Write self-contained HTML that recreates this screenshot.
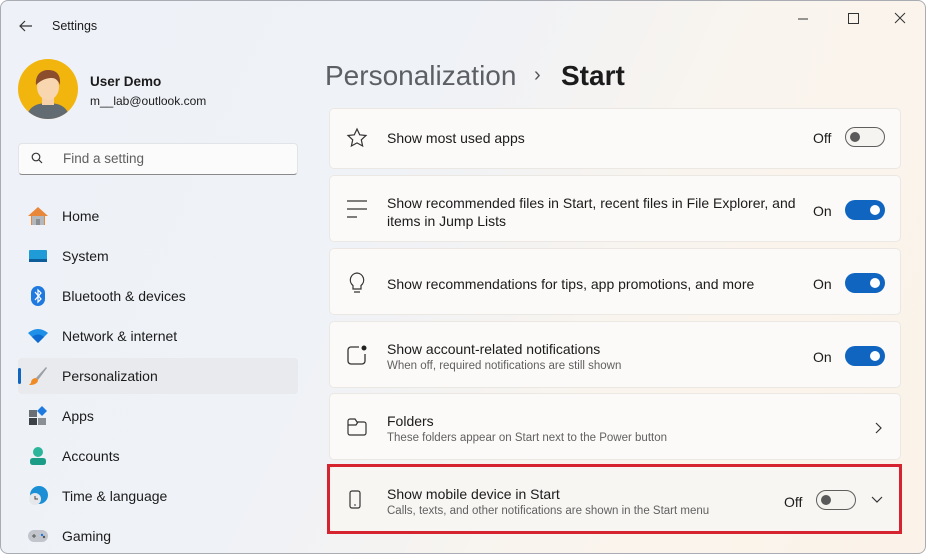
<!DOCTYPE html>
<html><head><style>
*{margin:0;padding:0;box-sizing:border-box}
body{width:926px;height:554px;overflow:hidden;font-family:"Liberation Sans",sans-serif;color:#1b1b1b;background:#fff}
.win{position:absolute;left:0;top:0;width:926px;height:554px;border:1px solid #a9acb2;border-radius:8px;overflow:hidden;
background:linear-gradient(115deg,#eef1f7 0%,#eff2f7 40%,#f9f4ee 65%,#fbf3e9 100%)}
.abs{position:absolute}
.nav{position:absolute;left:17px;width:280px;height:36px;display:flex;align-items:center;font-size:14px}
.nav .ic{width:22px;height:22px;margin-left:9px;margin-right:13px;display:flex;align-items:center;justify-content:center}
.card{position:absolute;left:328px;width:572px;background:#fbfaf8;border:1px solid #ebe8e4;border-radius:5px}
.lab{position:absolute;left:57px;font-size:14px;color:#1b1b1b}
.sub{position:absolute;left:57px;font-size:11.5px;color:#616161}
.st{position:absolute;font-size:14px}
.tog{position:absolute;width:40px;height:20px;border-radius:10px}
.on{background:#0f65c0}
.on::after{content:"";position:absolute;right:5px;top:5px;width:10px;height:10px;border-radius:50%;background:#fff}
.off{border:1px solid #5e5e5e;background:#f6f4f1}
.off::after{content:"";position:absolute;left:4px;top:4px;width:10px;height:10px;border-radius:50%;background:#5a5a5a}
.ci{position:absolute;left:16px}
</style></head><body><div class="win">
<svg class="abs" style="left:17px;top:18px" width="16" height="14" viewBox="0 0 16 14"><path d="M14 7H2M7 2L2 7l5 5" stroke="#333" stroke-width="1.2" fill="none"/></svg>
<div class="abs" style="left:51px;top:18px;font-size:12.5px">Settings</div>
<svg class="abs" style="left:797px;top:11px" width="120" height="14"><path d="M0 7h10" stroke="#333"/><rect x="50.5" y="1.5" width="10" height="10" fill="none" stroke="#333"/><path d="M97 1l10 10M107 1L97 11" stroke="#333"/></svg>
<svg class="abs" style="left:17px;top:58px" width="60" height="60" viewBox="0 0 60 60"><defs><clipPath id="c"><circle cx="30" cy="30" r="30"/></clipPath></defs><g clip-path="url(#c)"><rect width="60" height="60" fill="#f2b50d"/><path d="M8 60c2-12 10-16 22-16s20 4 22 16z" fill="#636b72"/><rect x="24" y="36" width="12" height="10" fill="#f5d0a8"/><ellipse cx="30" cy="28" rx="11" ry="13" fill="#f7d6b0"/><path d="M18 26c-1-10 5-15 12-15 8 0 13 4 12 15-2-5-5-7-8-7-4 0-10 1-16 7z" fill="#8b4d2b"/></g></svg>
<div class="abs" style="left:89px;top:73px;font-size:13.5px;font-weight:bold">User Demo</div>
<div class="abs" style="left:89px;top:93px;font-size:12px">m__lab@outlook.com</div>
<div class="abs" style="left:17px;top:142px;width:280px;height:32px;background:#fbfbfc;border:1px solid #e3e4e8;border-bottom:1px solid #8a8a8a;border-radius:4px"></div>
<svg class="abs" style="left:30px;top:151px" width="12" height="12"><circle cx="5" cy="5" r="3.8" fill="none" stroke="#333" stroke-width="1.2"/><path d="M8 8l3 3" stroke="#333" stroke-width="1.2"/></svg>
<div class="abs" style="left:62px;top:150px;font-size:13.5px;color:#5f5f5f">Find a setting</div>

<div class="nav" style="top:197px"><span class="ic"><svg width="22" height="20"><path d="M11 1L1 10h3v9h14v-9h3z" fill="#e8873a"/><rect x="5" y="10" width="12" height="9" fill="#b4b8bd"/><rect x="9" y="13" width="4" height="6" fill="#8a8f94"/></svg></span>Home</div>
<div class="nav" style="top:237px"><span class="ic"><svg width="20" height="16"><rect x="1" y="2" width="18" height="12" rx="1" fill="#1f9bd8"/><rect x="1" y="11" width="18" height="3" fill="#0d5d9a"/></svg></span>System</div>
<div class="nav" style="top:277px"><span class="ic"><svg width="16" height="22"><rect x="1" y="1" width="14" height="20" rx="7" fill="#1f7ae0"/><path d="M5 7l6 7-3 3V5l3 3-6 7" stroke="#fff" stroke-width="1.2" fill="none"/></svg></span>Bluetooth &amp; devices</div>
<div class="nav" style="top:317px"><span class="ic"><svg width="22" height="16"><path d="M1 5q10-8 20 0L11 15z" fill="#1e90e8"/><path d="M5 9q6-5 12 0l-6 6z" fill="#0c6ad0"/></svg></span>Network &amp; internet</div>
<div class="nav" style="top:357px;background:#e9eaee;border-radius:4px"><span class="abs" style="left:0;top:10px;width:3px;height:16px;background:#0f65c0;border-radius:2px"></span><span class="ic"><svg width="20" height="20"><path d="M18 1L8 12l2 2L19 2z" fill="#9aa0a6"/><path d="M8 12c-3 0-5 2-5 5l-2 2c4 0 9-1 9-5z" fill="#f08a24"/></svg></span>Personalization</div>
<div class="nav" style="top:397px"><span class="ic"><svg width="20" height="20"><rect x="1" y="4" width="8" height="7" fill="#6a6f76"/><rect x="1" y="12" width="8" height="7" fill="#3c4147"/><rect x="10" y="12" width="8" height="7" fill="#8a8f96"/><path d="M14 0l5 5-5 5-5-5z" fill="#1f7ae0"/></svg></span>Apps</div>
<div class="nav" style="top:437px"><span class="ic"><svg width="20" height="20"><circle cx="10" cy="6" r="5" fill="#2bb59a"/><path d="M2 15q0-3 3-3h10q3 0 3 3v1q0 3-3 3H5q-3 0-3-3z" fill="#1a9c86"/></svg></span>Accounts</div>
<div class="nav" style="top:477px"><span class="ic"><svg width="22" height="22"><circle cx="12" cy="10" r="9" fill="#1b8fd6"/><circle cx="8" cy="14" r="6" fill="#e6e7ea"/><path d="M8 11v3h3" stroke="#444" fill="none"/></svg></span>Time &amp; language</div>
<div class="nav" style="top:517px"><span class="ic"><svg width="22" height="16"><rect x="1" y="2" width="20" height="12" rx="6" fill="#c2c6cc"/><path d="M5 8h4M7 6v4" stroke="#555"/><circle cx="15" cy="7" r="1.2" fill="#1f7ae0"/><circle cx="17" cy="9" r="1.2" fill="#555"/></svg></span>Gaming</div>

<div class="abs" style="left:324px;top:59px;font-size:28px;color:#5c5f64">Personalization</div>
<div class="abs" style="left:533px;top:63px;font-size:20px;color:#555">›</div>
<div class="abs" style="left:560px;top:59px;font-size:28px;font-weight:bold">Start</div>

<div class="card" style="top:107px;height:61px">
<svg class="ci" style="top:18px" width="22" height="22"><path d="M11 2l2.7 5.8 6.3.7-4.7 4.3 1.3 6.2L11 15.9 5.4 19l1.3-6.2L2 8.5l6.3-.7z" fill="none" stroke="#333" stroke-width="1.2"/></svg>
<div class="lab" style="top:21px">Show most used apps</div><div class="st" style="left:483px;top:21px">Off</div><div class="tog off" style="left:515px;top:18px"></div></div>

<div class="card" style="top:174px;height:67px">
<svg class="ci" style="top:23px" width="22" height="20"><path d="M1 2h20M1 10h20M1 18h10" stroke="#333" stroke-width="1.2"/></svg>
<div class="lab" style="top:18px;line-height:18px;width:420px">Show recommended files in Start, recent files in File Explorer, and items in Jump Lists</div>
<div class="st" style="left:483px;top:27px">On</div><div class="tog on" style="left:515px;top:24px"></div></div>

<div class="card" style="top:247px;height:67px">
<svg class="ci" style="top:22px" width="22" height="24"><path d="M11 2a7 7 0 0 0-4 12.5V18h8v-3.5A7 7 0 0 0 11 2zM8 21h6" fill="none" stroke="#333" stroke-width="1.2"/></svg>
<div class="lab" style="top:27px">Show recommendations for tips, app promotions, and more</div>
<div class="st" style="left:483px;top:27px">On</div><div class="tog on" style="left:515px;top:24px"></div></div>

<div class="card" style="top:320px;height:67px">
<svg class="ci" style="top:22px" width="22" height="22"><path d="M13 3H5a3 3 0 0 0-3 3v11a3 3 0 0 0 3 3h11a3 3 0 0 0 3-3v-7" fill="none" stroke="#333" stroke-width="1.3"/><circle cx="18" cy="4" r="2.5" fill="#222"/></svg>
<div class="lab" style="top:19px">Show account-related notifications</div><div class="sub" style="top:38px">When off, required notifications are still shown</div>
<div class="st" style="left:483px;top:27px">On</div><div class="tog on" style="left:515px;top:24px"></div></div>

<div class="card" style="top:392px;height:67px">
<svg class="ci" style="top:23px" width="22" height="20"><path d="M2 4a2 2 0 0 1 2-2h5l2 3h7a2 2 0 0 1 2 2v9a2 2 0 0 1-2 2H4a2 2 0 0 1-2-2zM2 8h8l2-3" fill="none" stroke="#333" stroke-width="1.2"/></svg>
<div class="lab" style="top:19px">Folders</div><div class="sub" style="top:38px">These folders appear on Start next to the Power button</div>
<svg class="abs" style="left:543px;top:27px" width="10" height="14"><path d="M3 2l5 5-5 5" stroke="#333" stroke-width="1.2" fill="none"/></svg></div>

<div class="card" style="top:465px;height:66px;background:#f8f6f3"></div>
<div class="abs" style="left:326px;top:463px;width:575px;height:70px;border:3px solid #d5232f"></div>
<svg class="abs" style="left:346px;top:488px" width="16" height="22"><rect x="3" y="2" width="10" height="17" rx="2" fill="none" stroke="#333" stroke-width="1.2"/><path d="M7 16h2" stroke="#333"/></svg>
<div class="abs" style="left:386px;top:485px;font-size:14px">Show mobile device in Start</div>
<div class="abs" style="left:386px;top:504px;font-size:11.5px;color:#616161">Calls, texts, and other notifications are shown in the Start menu</div>
<div class="st" style="left:783px;top:493px">Off</div><div class="tog off" style="left:815px;top:489px"></div>
<svg class="abs" style="left:869px;top:494px" width="14" height="10"><path d="M2 2l5 5 5-5" stroke="#333" stroke-width="1.2" fill="none"/></svg>
</div></body></html>
